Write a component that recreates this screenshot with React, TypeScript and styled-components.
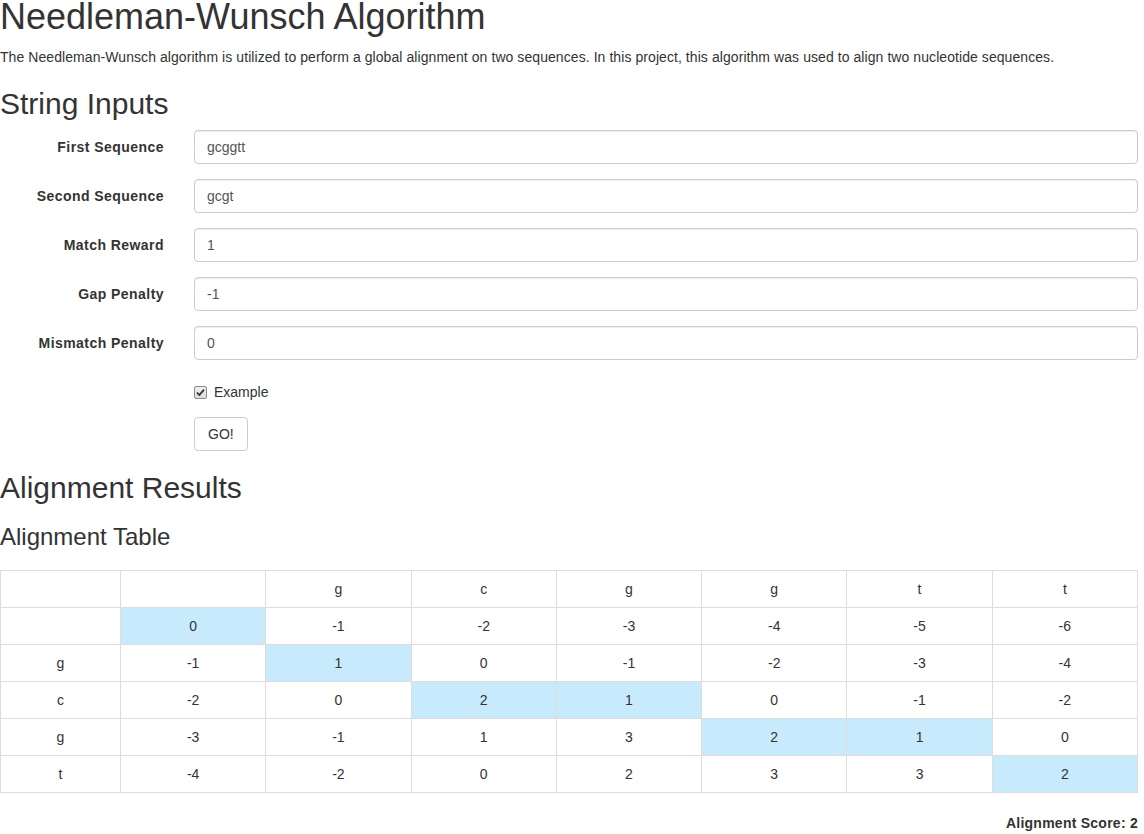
import React from "react";
import styled, { createGlobalStyle } from "styled-components";

const GlobalStyle = createGlobalStyle`
  html, body { margin: 0; padding: 0; background: #fff; }
  body {
    font-family: "Liberation Sans", Arial, Helvetica, sans-serif;
    font-size: 14px;
    line-height: 1.42857143;
    color: #333;
  }
  * { box-sizing: border-box; }
`;

const Page = styled.div`
  width: 1138px;
`;

const Title = styled.h1`
  font-size: 36px;
  font-weight: 500;
  line-height: 34px;
  margin: 0 0 13px;
`;

const Intro = styled.p`
  margin: 0 0 10px;
  letter-spacing: 0.07px;
`;

const SectionTitle = styled.h2`
  font-size: 30px;
  font-weight: 500;
  line-height: 1.1;
  margin: 20px 0 10px;
`;

const SubTitle = styled.h3`
  font-size: 24px;
  font-weight: 500;
  line-height: 1.1;
  margin: 20px 0 10px;
`;

const Form = styled.form`
  margin: 0;
`;

const FormGroup = styled.div`
  display: grid;
  grid-template-columns: 164px 1fr;
  column-gap: 30px;
  margin-bottom: 15px;
`;

const Label = styled.label`
  text-align: right;
  font-weight: 700;
  letter-spacing: 0.45px;
  padding-top: 7px;
`;

const Input = styled.input`
  display: block;
  width: 100%;
  height: 34px;
  padding: 6px 12px;
  font-family: inherit;
  font-size: 14px;
  line-height: 1.42857143;
  color: #555;
  background: #fff;
  border: 1px solid #ccc;
  border-radius: 4px;
  box-shadow: inset 0 1px 1px rgba(0, 0, 0, 0.075);
  outline: none;
`;

const CheckRow = styled.label`
  grid-column: 2;
  display: flex;
  align-items: center;
  gap: 7px;
  padding-top: 7px;
  min-height: 27px;
  cursor: pointer;
`;

const CheckBox = styled.span`
  width: 13px;
  height: 13px;
  border: 1px solid #8a8a8a;
  border-radius: 2px;
  background: linear-gradient(#f0f0f0, #dcdcdc);
  display: flex;
  align-items: center;
  justify-content: center;
  margin-top: 1px;
`;

const ButtonCell = styled.div`
  grid-column: 2;
`;

const Button = styled.button`
  display: inline-block;
  height: 34px;
  padding: 6px 13px;
  font-family: inherit;
  font-size: 14px;
  line-height: 1.42857143;
  color: #333;
  background: #fff;
  border: 1px solid #ccc;
  border-radius: 4px;
  cursor: pointer;
`;

const TableWrap = styled.div`
  padding-top: 10px;
`;

const Table = styled.table`
  width: 100%;
  table-layout: fixed;
  border-collapse: collapse;
  border-spacing: 0;
  margin-bottom: 20px;
  border: 1px solid #ddd;
`;

const Cell = styled.td<{ $hl?: boolean }>`
  border: 1px solid #ddd;
  padding: 8px;
  height: 37px;
  text-align: center;
  line-height: 1.42857143;
  background: ${(p) => (p.$hl ? "#c7eafc" : "#fff")};
`;

const Score = styled.div`
  text-align: right;
  font-weight: 700;
  letter-spacing: 0.25px;
`;

const header = ["", "", "g", "c", "g", "g", "t", "t"];
const rows: string[][] = [
  ["", "0", "-1", "-2", "-3", "-4", "-5", "-6"],
  ["g", "-1", "1", "0", "-1", "-2", "-3", "-4"],
  ["c", "-2", "0", "2", "1", "0", "-1", "-2"],
  ["g", "-3", "-1", "1", "3", "2", "1", "0"],
  ["t", "-4", "-2", "0", "2", "3", "3", "2"],
];
const highlights = new Set(["0-1", "1-2", "2-3", "2-4", "3-5", "3-6", "4-7"]);

const fields = [
  { label: "First Sequence", value: "gcggtt" },
  { label: "Second Sequence", value: "gcgt" },
  { label: "Match Reward", value: "1" },
  { label: "Gap Penalty", value: "-1" },
  { label: "Mismatch Penalty", value: "0" },
];

export default function App() {
  return (
    <Page>
      <GlobalStyle />
      <Title>Needleman-Wunsch Algorithm</Title>
      <Intro>
        The Needleman-Wunsch algorithm is utilized to perform a global alignment on two
        sequences. In this project, this algorithm was used to align two nucleotide sequences.
      </Intro>
      <SectionTitle>String Inputs</SectionTitle>
      <Form onSubmit={(e) => e.preventDefault()}>
        {fields.map((f) => (
          <FormGroup key={f.label}>
            <Label>{f.label}</Label>
            <Input defaultValue={f.value} />
          </FormGroup>
        ))}
        <FormGroup>
          <CheckRow>
            <CheckBox>
              <svg width="9" height="9" viewBox="0 0 9 9">
                <path d="M1 4.6 L3.4 7 L8 1.6" fill="none" stroke="#333" strokeWidth="1.8" />
              </svg>
            </CheckBox>
            Example
          </CheckRow>
        </FormGroup>
        <FormGroup>
          <ButtonCell>
            <Button type="submit">GO!</Button>
          </ButtonCell>
        </FormGroup>
      </Form>
      <SectionTitle>Alignment Results</SectionTitle>
      <SubTitle>Alignment Table</SubTitle>
      <TableWrap>
        <Table>
          <colgroup>
            <col style={{ width: 120 }} />
            <col />
            <col />
            <col />
            <col />
            <col />
            <col />
            <col />
          </colgroup>
          <tbody>
            <tr>
              {header.map((h, i) => (
                <Cell key={i}>{h}</Cell>
              ))}
            </tr>
            {rows.map((r, ri) => (
              <tr key={ri}>
                {r.map((v, ci) => (
                  <Cell key={ci} $hl={highlights.has(`${ri}-${ci}`)}>
                    {v}
                  </Cell>
                ))}
              </tr>
            ))}
          </tbody>
        </Table>
        <Score>Alignment Score: 2</Score>
      </TableWrap>
    </Page>
  );
}
